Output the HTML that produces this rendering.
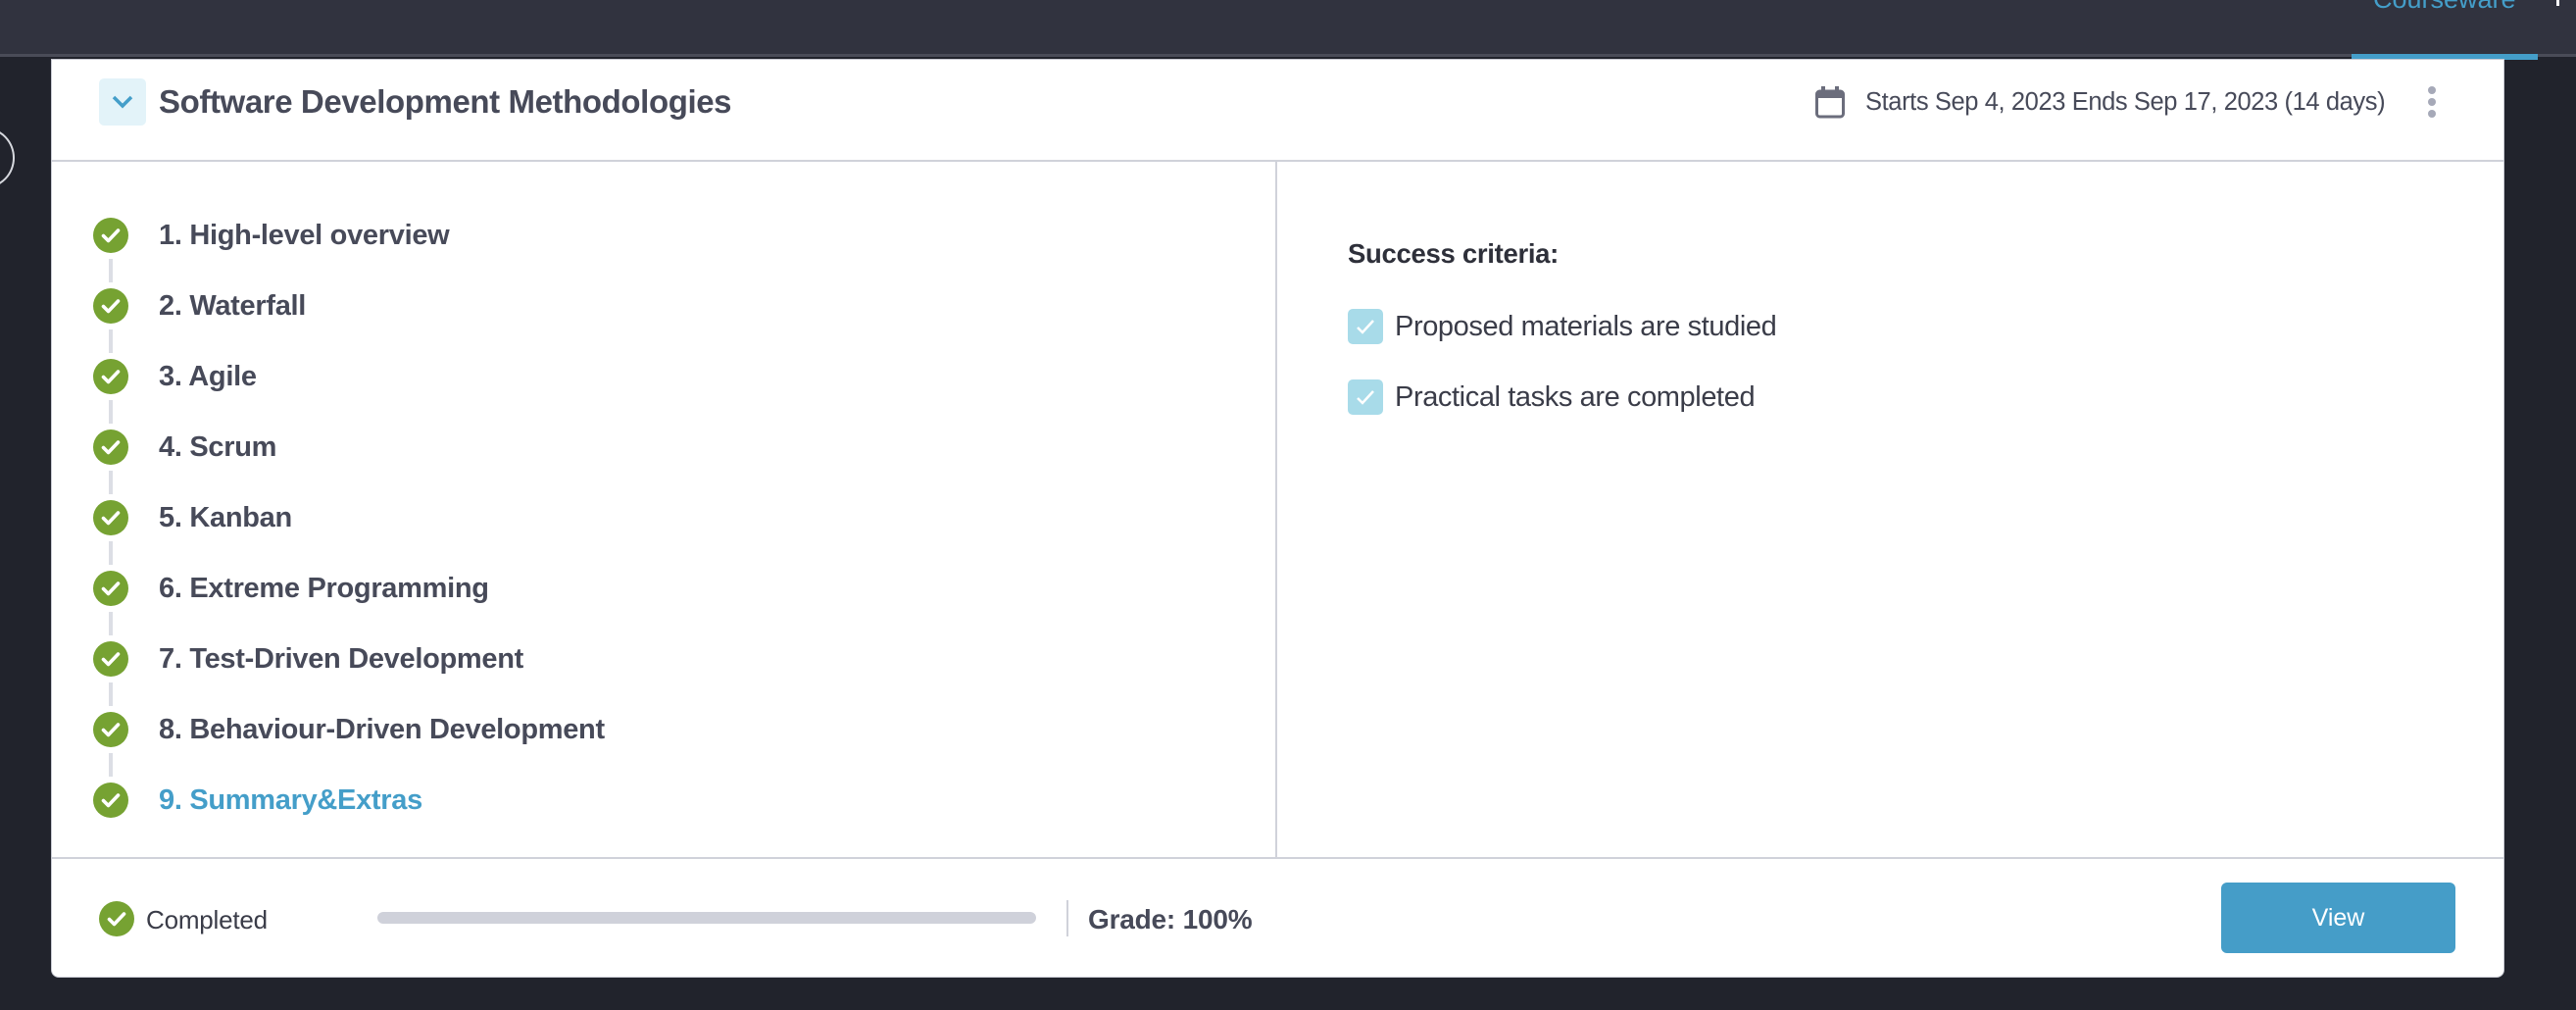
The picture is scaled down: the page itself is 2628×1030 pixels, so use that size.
<!DOCTYPE html>
<html><head><meta charset="utf-8"><style>
*{margin:0;padding:0;box-sizing:border-box}
body{width:2628px;height:1030px;background:#21232c;position:relative;overflow:hidden;font-family:"Liberation Sans",sans-serif}
.abs{position:absolute}
.nav{left:0;top:0;width:2628px;height:58px;background:#31333f;border-bottom:3px solid #4a4c58}
.card{left:52px;top:60px;width:2503px;height:937px;background:#fff;border-radius:0 0 8px 8px;border:1px solid #c9cbd3}
.t{white-space:nowrap}
.item{left:162px;font-size:29px;font-weight:bold;color:#474a59;letter-spacing:-0.3px}
.conn{left:111px;width:4px;height:24px;background:#dcdee5}
</style></head><body>
<div class="abs nav"></div>
<div class="abs t" style="left:2421px;top:-16px;font-size:27px;color:#449ec9">Courseware</div>
<div class="abs" style="left:2399px;top:55px;width:190px;height:6px;background:#449ec9"></div>
<div class="abs" style="left:2608px;top:0;width:3px;height:6px;background:#fff"></div>
<div class="abs" style="left:-45px;top:130px;width:60px;height:62px;border-radius:50%;border:2px solid #d6d8de"></div>
<div class="abs card"></div>
<!-- header -->
<div class="abs" style="left:101px;top:80px;width:48px;height:48px;background:#e3f3f9;border-radius:5px"></div>
<svg class="abs" style="left:113px;top:95px" width="24" height="18" viewBox="0 0 24 18"><path d="M3 4 L12 13 L21 4" fill="none" stroke="#449ec9" stroke-width="3.5"/></svg>
<div class="abs t" style="left:162px;top:85px;font-size:33px;font-weight:bold;color:#474a59;letter-spacing:-0.4px">Software Development Methodologies</div>
<svg class="abs" style="left:1852px;top:87px" width="30" height="34" viewBox="0 0 30 34"><rect x="1.5" y="6" width="27" height="26" rx="3" fill="none" stroke="#6b6d7c" stroke-width="3"/><rect x="1.5" y="6" width="27" height="7" fill="#6b6d7c"/><rect x="6" y="1" width="4" height="8" fill="#6b6d7c"/><rect x="20" y="1" width="4" height="8" fill="#6b6d7c"/></svg>
<div class="abs t" style="left:1903px;top:90px;font-size:25.5px;color:#474a59;letter-spacing:-0.4px">Starts Sep 4, 2023 Ends Sep 17, 2023 (14 days)</div>
<div class="abs" style="left:2477px;top:88px;width:8px;height:8px;border-radius:50%;background:#a6a9b8"></div>
<div class="abs" style="left:2477px;top:100px;width:8px;height:8px;border-radius:50%;background:#a6a9b8"></div>
<div class="abs" style="left:2477px;top:112px;width:8px;height:8px;border-radius:50%;background:#a6a9b8"></div>
<div class="abs" style="left:53px;top:163px;width:2501px;height:2px;background:#d0d2da"></div>
<div class="abs" style="left:1301px;top:165px;width:2px;height:710px;background:#d0d2da"></div>
<div class="abs" style="left:53px;top:874px;width:2501px;height:2px;background:#d0d2da"></div>
<!-- list -->
<svg width="0" height="0" style="position:absolute"><defs><symbol id="ck" viewBox="0 0 36 36"><circle cx="18" cy="18" r="18" fill="#76a232"/><path d="M10.5 18.5 L15.5 23.5 L25.5 13" fill="none" stroke="#fff" stroke-width="3.6" stroke-linecap="round" stroke-linejoin="round"/></symbol></defs></svg>
<svg class="abs" style="left:95px;top:222px" width="36" height="36"><use href="#ck"/></svg>
<svg class="abs" style="left:95px;top:294px" width="36" height="36"><use href="#ck"/></svg>
<svg class="abs" style="left:95px;top:366px" width="36" height="36"><use href="#ck"/></svg>
<svg class="abs" style="left:95px;top:438px" width="36" height="36"><use href="#ck"/></svg>
<svg class="abs" style="left:95px;top:510px" width="36" height="36"><use href="#ck"/></svg>
<svg class="abs" style="left:95px;top:582px" width="36" height="36"><use href="#ck"/></svg>
<svg class="abs" style="left:95px;top:654px" width="36" height="36"><use href="#ck"/></svg>
<svg class="abs" style="left:95px;top:726px" width="36" height="36"><use href="#ck"/></svg>
<svg class="abs" style="left:95px;top:798px" width="36" height="36"><use href="#ck"/></svg>
<div class="abs conn" style="top:264px"></div>
<div class="abs conn" style="top:336px"></div>
<div class="abs conn" style="top:408px"></div>
<div class="abs conn" style="top:480px"></div>
<div class="abs conn" style="top:552px"></div>
<div class="abs conn" style="top:624px"></div>
<div class="abs conn" style="top:696px"></div>
<div class="abs conn" style="top:768px"></div>
<div class="abs t item" style="top:224px">1. High-level overview</div>
<div class="abs t item" style="top:296px">2. Waterfall</div>
<div class="abs t item" style="top:368px">3. Agile</div>
<div class="abs t item" style="top:440px">4. Scrum</div>
<div class="abs t item" style="top:512px">5. Kanban</div>
<div class="abs t item" style="top:584px">6. Extreme Programming</div>
<div class="abs t item" style="top:656px">7. Test-Driven Development</div>
<div class="abs t item" style="top:728px">8. Behaviour-Driven Development</div>
<div class="abs t item" style="top:800px;color:#449ec9">9. Summary&amp;Extras</div>
<!-- criteria -->
<div class="abs t" style="left:1375px;top:243px;font-size:27.5px;font-weight:bold;color:#2e303a;letter-spacing:-0.3px">Success criteria:</div>
<svg class="abs" style="left:1375px;top:315px" width="36" height="36" viewBox="0 0 36 36"><rect width="36" height="36" rx="5" fill="#a8dbe9"/><path d="M10 19 L15 24 L26 12" fill="none" stroke="#fff" stroke-width="2.5"/></svg>
<svg class="abs" style="left:1375px;top:387px" width="36" height="36" viewBox="0 0 36 36"><rect width="36" height="36" rx="5" fill="#a8dbe9"/><path d="M10 19 L15 24 L26 12" fill="none" stroke="#fff" stroke-width="2.5"/></svg>
<div class="abs t" style="left:1423px;top:317px;font-size:29px;color:#3a3c48;letter-spacing:-0.4px">Proposed materials are studied</div>
<div class="abs t" style="left:1423px;top:389px;font-size:29px;color:#3a3c48;letter-spacing:-0.4px">Practical tasks are completed</div>
<!-- footer -->
<svg class="abs" style="left:101px;top:919px" width="36" height="36"><use href="#ck"/></svg>
<div class="abs t" style="left:149px;top:923px;font-size:26px;color:#3a3c48;letter-spacing:-0.2px">Completed</div>
<div class="abs" style="left:385px;top:930px;width:672px;height:12px;border-radius:6px;background:#cfd1da"></div>
<div class="abs" style="left:1088px;top:918px;width:2px;height:37px;background:#d0d2da"></div>
<div class="abs t" style="left:1110px;top:922px;font-size:28px;font-weight:bold;color:#474a59;letter-spacing:-0.2px">Grade: 100%</div>
<div class="abs" style="left:2266px;top:900px;width:239px;height:72px;border-radius:6px;background:#459dc8;color:#fff;font-size:25px;text-align:center;line-height:72px">View</div>
</body></html>
